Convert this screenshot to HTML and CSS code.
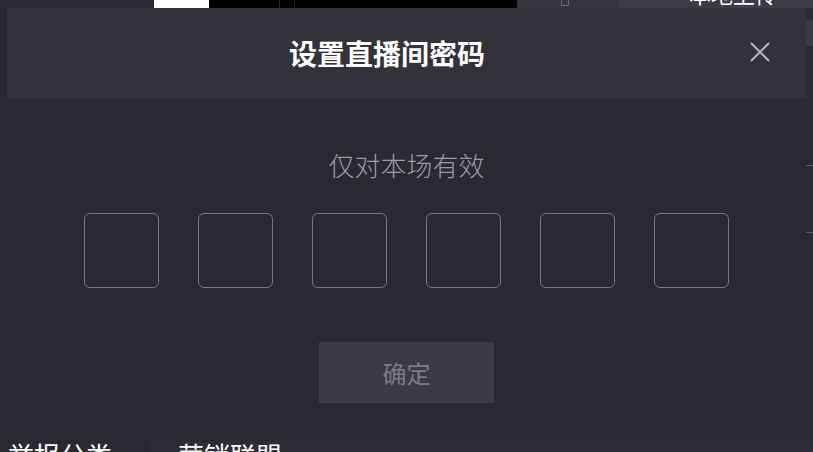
FILE: index.html
```html
<!DOCTYPE html>
<html lang="zh-CN">
<head>
<meta charset="utf-8">
<title>设置直播间密码</title>
<link rel="stylesheet" href="styles.css">
</head>
<body>
<div class="page">
  <div class="top">
    <div class="t-dark"></div>
    <div class="t-white"></div>
    <div class="t-black t-b1"></div>
    <div class="t-black t-b2"></div>
    <div class="t-black t-b3"></div>
    <div class="t-gray"><span class="t-dot"></span></div>
    <div class="t-light"><span class="t-upload">本地上传</span></div>
  </div>
  <div class="middle">
    <div class="side-left"></div>
    <div class="modal">
      <div class="modal-head">
        <div></div>
        <div class="modal-title">设置直播间密码</div>
        <div class="close-wrap">
          <svg class="close" viewBox="0 0 22 22" width="22" height="22">
            <path d="M2 2 L20 20 M20 2 L2 20" stroke="#b4b3ba" stroke-width="2" fill="none"/>
          </svg>
        </div>
      </div>
      <div class="modal-body">
        <div class="subtitle">仅对本场有效</div>
        <div class="codes">
          <div class="code"></div>
          <div class="code"></div>
          <div class="code"></div>
          <div class="code"></div>
          <div class="code"></div>
          <div class="code"></div>
        </div>
        <button class="confirm">确定</button>
      </div>
    </div>
    <div class="side-right">
      <div class="thumb"></div>
      <div class="tick tick1"></div>
      <div class="tick tick2"></div>
    </div>
  </div>
  <div class="bottom">
    <div class="b-seg b-seg1">举报分类</div>
    <div class="b-seg b-seg2">营销联盟</div>
  </div>
</div>
</body>
</html>
```

FILE: styles.css
```css
html, body {
  margin: 0;
  padding: 0;
}
body {
  background: #2a2932;
  font-family: "Noto Sans CJK SC", "Noto Sans", sans-serif;
  overflow: hidden;
}
.page {
  width: 813px;
  height: 452px;
  display: flex;
  flex-direction: column;
  overflow: hidden;
}

/* top strip of page behind the modal */
.top {
  height: 8px;
  display: flex;
  overflow: hidden;
  flex-shrink: 0;
}
.t-dark { width: 154px; background: #2a2932; }
.t-white { width: 55px; background: #ffffff; }
.t-black { background: #000; }
.t-b1 { width: 70px; border-right: 1px solid #2a2a2a; }
.t-b2 { width: 14px; border-right: 1px solid #1e1e1e; }
.t-b3 { width: 222px; }
.t-gray {
  width: 102px;
  background: #36353e;
  display: flex;
}
.t-dot {
  width: 6px;
  height: 5px;
  margin-left: 44px;
  border: 1px solid #6a6970;
  border-top: none;
}
.t-light {
  flex: 1;
  background: #3c3b46;
  overflow: hidden;
}
.t-upload {
  display: block;
  margin-left: 70px;
  margin-top: -18px;
  font-size: 22px;
  line-height: 22px;
  color: #ffffff;
  white-space: nowrap;
}

/* middle row */
.middle {
  height: 433px;
  display: flex;
  flex-shrink: 0;
}
.side-left { width: 7px; background: #2a2932; }
.modal {
  width: 799px;
  display: flex;
  flex-direction: column;
  background: #2a2932;
}
.modal-head {
  height: 90px;
  background: #33323c;
  display: grid;
  grid-template-columns: 1fr auto 1fr;
  align-items: center;
}
.modal-title {
  font-size: 28px;
  font-weight: 700;
  color: #ffffff;
  letter-spacing: 0;
  padding-right: 39px;
  line-height: 36px;
}
.close-wrap {
  justify-self: end;
  margin-right: 35px;
  display: flex;
  margin-top: -2px;
}
.close { display: block; }

.modal-body {
  flex: 1;
  display: flex;
  flex-direction: column;
  align-items: center;
  padding-top: 49px;
}
.subtitle {
  font-size: 26px;
  line-height: 36px;
  color: #9c9ba3;
  font-weight: 300;
}
.codes {
  margin-top: 30px;
  display: flex;
  gap: 39px;
}
.code {
  width: 75px;
  height: 75px;
  box-sizing: border-box;
  border: 1.5px solid #77767e;
  border-radius: 6px;
}
.confirm {
  margin-top: 54px;
  width: 175px;
  height: 61px;
  border: none;
  background: #3b3a47;
  color: #7c7b85;
  font-family: "Noto Sans CJK SC", sans-serif;
  font-size: 24px;
  padding: 0;
}

.side-right {
  flex: 1;
  background: #2b2a33;
  display: flex;
  flex-direction: column;
}
.thumb {
  height: 26px;
  margin-top: 12px;
  background: #3b3a44;
}
.tick {
  height: 1px;
  background: #5d5c64;
}
.tick1 { margin-top: 119px; }
.tick2 { margin-top: 66px; }

/* bottom strip */
.bottom {
  flex: 1;
  display: flex;
  overflow: hidden;
}
.b-seg {
  font-size: 26px;
  line-height: 26px;
  color: #ffffff;
  white-space: nowrap;
  padding-top: 1px;
}
.b-seg1 {
  width: 142px;
  padding-left: 8px;
  background: #2a2932;
}
.b-seg2 {
  flex: 1;
  padding-left: 28px;
  background: #2e2d36;
}
```
